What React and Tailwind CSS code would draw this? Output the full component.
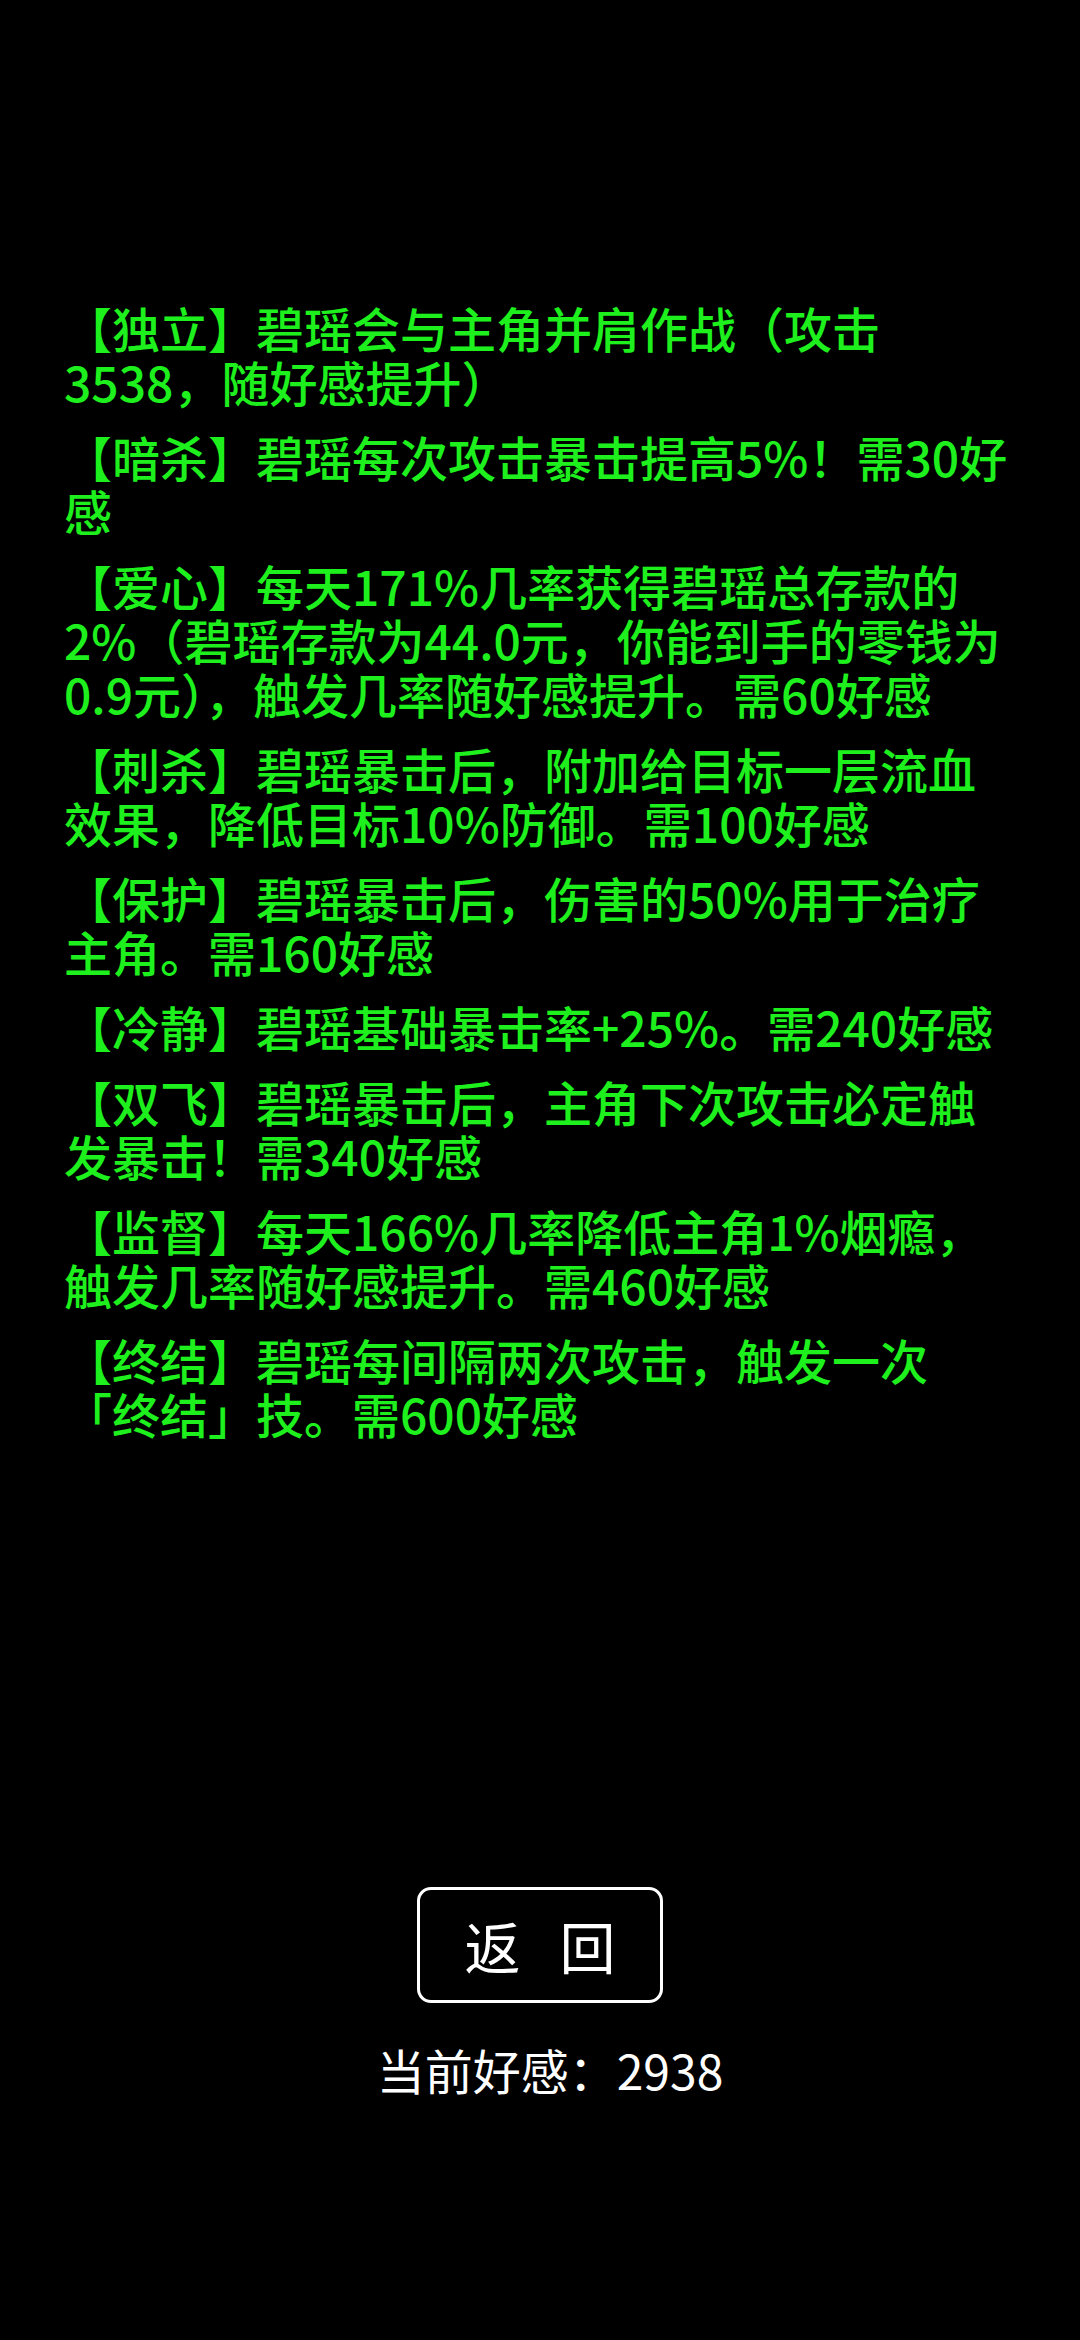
const skills = [
  "【独立】碧瑶会与主角并肩作战（攻击3538，随好感提升）",
  "【暗杀】碧瑶每次攻击暴击提高5%！需30好感",
  "【爱心】每天171%几率获得碧瑶总存款的2%（碧瑶存款为44.0元，你能到手的零钱为0.9元），触发几率随好感提升。需60好感",
  "【刺杀】碧瑶暴击后，附加给目标一层流血效果，降低目标10%防御。需100好感",
  "【保护】碧瑶暴击后，伤害的50%用于治疗主角。需160好感",
  "【冷静】碧瑶基础暴击率+25%。需240好感",
  "【双飞】碧瑶暴击后，主角下次攻击必定触发暴击！需340好感",
  "【监督】每天166%几率降低主角1%烟瘾，触发几率随好感提升。需460好感",
  "【终结】碧瑶每间隔两次攻击，触发一次「终结」技。需600好感"
]

export default function App() {
  return (
    <div
      className="min-h-[2340px] w-full bg-black flex flex-col items-center"
      style={{ fontFamily: '"Noto Sans CJK SC", "Noto Sans", sans-serif' }}
    >
      <div className="w-full pt-[300px] pl-[64px] pr-[72px]">
        {skills.map((s, i) => (
          <p key={i} className="text-[48px] leading-[54px] mb-[21px] font-medium text-[#1ef01e]">
            {s}
          </p>
        ))}
      </div>

      <button className="mt-[426px] w-[246px] h-[116px] border-[3px] border-white rounded-[14px] flex items-center justify-center text-white text-[56px] leading-none">
        <span>返</span>
        <span className="ml-[39px]">回</span>
      </button>

      <div className="mt-[39px] pl-[20px] text-white text-[48px] leading-[55px]">当前好感：2938</div>
    </div>
  )
}
